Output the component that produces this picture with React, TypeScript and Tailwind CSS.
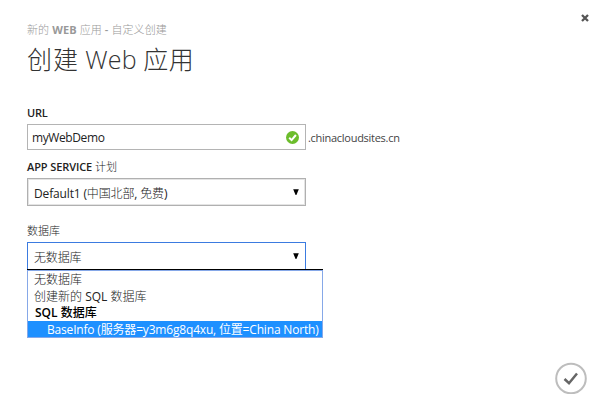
import type { ReactNode } from "react";

function Caret() {
  return (
    <svg className="mr-[6px] h-[6px] w-[6px] shrink-0" viewBox="0 0 6 6">
      <path d="M0.2 0.3H5.8L3.4 5.9H2.6Z" fill="#000" />
    </svg>
  );
}

function Select({ children, open = false }: { children: ReactNode; open?: boolean }) {
  return (
    <div
      className={
        open
          ? "flex h-[28px] w-[279px] items-center justify-between border border-[#3b7be0] bg-white pl-[6px]"
          : "flex h-[28px] w-[279px] items-center justify-between border border-[#b0b0b0] bg-white pl-[6px] shadow-[inset_0_0_0_1px_#e4e4e4]"
      }
    >
      <span className="pt-[3px] text-[12px] leading-[20px] tracking-[-0.15px]">{children}</span>
      <Caret />
    </div>
  );
}

export default function App() {
  return (
    <main className="relative flex h-[414px] w-[600px] flex-col overflow-hidden whitespace-nowrap bg-white pl-[27px] font-['Open_Sans','Noto_Sans_CJK_SC',sans-serif] text-[12px] text-[#222]">
      <button className="absolute left-[581px] top-[14px]" aria-label="Close">
        <svg className="block h-[8px] w-[8px]" viewBox="0 0 8 8">
          <path d="M1 1L7 7M7 1L1 7" stroke="#555" strokeWidth="2.3" />
        </svg>
      </button>

      <header className="pt-[22px]">
        <p className="h-[16px] text-[11px] leading-[16px] tracking-[0.1px] text-[#999]">
          <span className="font-light">新的</span> <span className="font-bold">WEB</span>{" "}
          <span className="font-light">应用</span> <span className="font-semibold">-</span>{" "}
          <span className="font-light">自定义创建</span>
        </p>
        <h1 className="mt-[3px] h-[36px] text-[25px] font-light leading-[36px] text-[#333]">
          <span className="tracking-[0.9px]">创建</span> <span className="tracking-[0.2px]">Web</span>{" "}
          <span className="tracking-[0.4px]">应用</span>
        </h1>
      </header>

      <section className="mt-[28px]">
        <label className="block h-[16px] text-[11px] font-semibold leading-[16px] tracking-[-0.2px]">URL</label>
        <div className="mt-[3px] flex h-[26px] items-center">
          <div className="flex h-[26px] w-[279px] items-center justify-between border border-[#b4b4b4] pl-[4px] pr-[6px]">
            <span className="pt-[2px] text-[12px] tracking-[-0.4px]">myWebDemo</span>
            <svg className="h-[14px] w-[14px]" viewBox="0 0 14 14">
              <circle cx="7.5" cy="7.5" r="6.5" fill="#6cbd2c" />
              <path d="M4.2 7.7L6.6 10.1L10.9 5" fill="none" stroke="#fff" strokeWidth="2" />
            </svg>
          </div>
          <span className="ml-[2px] pt-[3px] text-[11px] tracking-[-0.28px] text-[#444]">.chinacloudsites.cn</span>
        </div>
      </section>

      <section className="mt-[9px]">
        <label className="block h-[16px] text-[11px] leading-[16px]">
          <span className="font-semibold tracking-[-0.1px]">APP SERVICE</span>{" "}
          <span className="font-light">计划</span>
        </label>
        <div className="mt-[3px]">
          <Select>
            Default1 (<span className="font-light">中国北部</span>, <span className="font-light">免费</span>)
          </Select>
        </div>
      </section>

      <section className="relative mt-[17px]">
        <label className="block h-[16px] text-[11px] font-light leading-[16px]">数据库</label>
        <div className="mt-[3px]">
          <Select open>
            <span className="font-light">无数据库</span>
          </Select>
        </div>
        <div className="absolute left-0 top-[46px] w-[296px] border-t border-black">
          <ul className="flex h-[68px] flex-col border border-[#86a8e8] bg-white text-[12px] leading-[17px]">
            <li className="h-[17px] pl-[6px] font-light">无数据库</li>
            <li className="h-[16px] pl-[6px]">
              <span className="font-light">创建新的</span> SQL <span className="font-light">数据库</span>
            </li>
            <li className="h-[17px] pl-[7px] font-semibold leading-[18px] text-black">
              SQL <span className="font-medium">数据库</span>
            </li>
            <li className="h-[16px] bg-[#1e90ff] pl-[19px] tracking-[-0.18px] text-white">
              BaseInfo (服务器=y3m6g8q4xu, 位置=China North)
            </li>
          </ul>
        </div>
      </section>

      <button className="absolute left-[555px] top-[362px]" aria-label="Finish">
        <svg className="block h-[32px] w-[32px]" viewBox="0 0 32 32" fill="none">
          <circle cx="16" cy="16.5" r="14.8" stroke="#bdbdbd" strokeWidth="2" />
          <path d="M9.5 17L14 21.2L22 11.5" stroke="#666" strokeWidth="2.5" />
        </svg>
      </button>
    </main>
  );
}
